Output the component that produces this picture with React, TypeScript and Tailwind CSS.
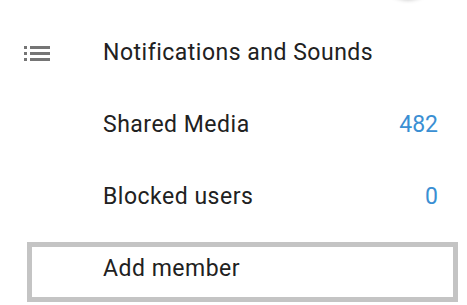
function ListIcon() {
    return (
        <svg width="26" height="15" viewBox="0 0 26 15" className="text-[#757575]" fill="currentColor">
            <rect x="0" y="0" width="3" height="3" />
            <rect x="6" y="0" width="20" height="3" />
            <rect x="0" y="6" width="3" height="3" />
            <rect x="6" y="6" width="20" height="3" />
            <rect x="0" y="12" width="3" height="3" />
            <rect x="6" y="12" width="20" height="3" />
        </svg>
    )
}

function App() {
    return (
        <div className="relative w-[467px] h-[305px] overflow-hidden bg-white text-[23px] text-[#212121] font-['Roboto',sans-serif]">
            {/* bord du bouton flottant, coupé en haut */}
            <div className="absolute left-[380px] -top-[57px] size-14 rounded-full bg-white shadow-[0_1px_4px_rgba(0,0,0,0.25)]" />

            <div className="pt-[17px]">
                <div className="flex items-center h-[72px]">
                    <div className="w-[103px] pl-[24px] flex items-center">
                        <ListIcon />
                    </div>
                    <span className="tracking-[0.5px]">Notifications and Sounds</span>
                </div>

                <div className="flex items-center h-[72px] pl-[103px] pr-[29px]">
                    <span className="flex-1 tracking-[0.5px]">Shared Media</span>
                    <span className="text-[#3a8fd3]">482</span>
                </div>

                <div className="flex items-center h-[72px] pl-[103px] pr-[29px]">
                    <span className="flex-1 tracking-[0.5px]">Blocked users</span>
                    <span className="text-[#3a8fd3]">0</span>
                </div>

                <div className="pt-[9px] pl-[27px] pr-[9px]">
                    <div className="flex items-center h-[60px] border-[5px] border-[#c4c4c4] pl-[71px] pb-[5px]">
                        <span className="tracking-[0.5px]">Add member</span>
                    </div>
                </div>
            </div>
        </div>
    )
}

export default App
